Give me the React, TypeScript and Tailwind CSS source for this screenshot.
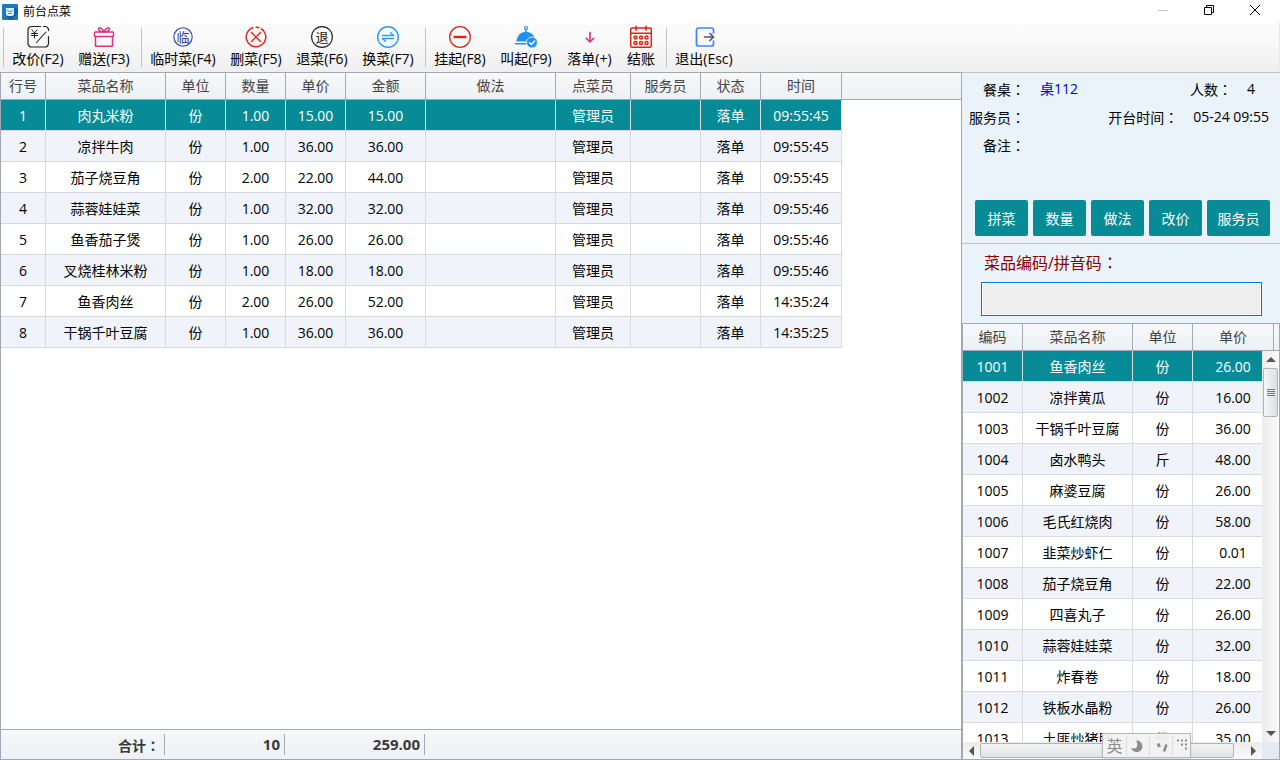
import type { ReactNode } from 'react'
import clsx from 'clsx'

interface OrderLine {
  name: string
  qty: string
  price: string
  amount: string
  time: string
}

interface Dish {
  code: string
  name: string
  unit: string
  price: string
}

const ORDER_LINES: OrderLine[] = [
  { name: '肉丸米粉', qty: '1.00', price: '15.00', amount: '15.00', time: '09:55:45' },
  { name: '凉拌牛肉', qty: '1.00', price: '36.00', amount: '36.00', time: '09:55:45' },
  { name: '茄子烧豆角', qty: '2.00', price: '22.00', amount: '44.00', time: '09:55:45' },
  { name: '蒜蓉娃娃菜', qty: '1.00', price: '32.00', amount: '32.00', time: '09:55:46' },
  { name: '鱼香茄子煲', qty: '1.00', price: '26.00', amount: '26.00', time: '09:55:46' },
  { name: '叉烧桂林米粉', qty: '1.00', price: '18.00', amount: '18.00', time: '09:55:46' },
  { name: '鱼香肉丝', qty: '2.00', price: '26.00', amount: '52.00', time: '14:35:24' },
  { name: '干锅千叶豆腐', qty: '1.00', price: '36.00', amount: '36.00', time: '14:35:25' },
]

const ORDER_COLUMNS = [
  { label: '行号', width: 'w-[45px]' },
  { label: '菜品名称', width: 'w-[120px]' },
  { label: '单位', width: 'w-[60px]' },
  { label: '数量', width: 'w-[60px]' },
  { label: '单价', width: 'w-[60px]' },
  { label: '金额', width: 'w-[80px]' },
  { label: '做法', width: 'w-[130px]' },
  { label: '点菜员', width: 'w-[75px]' },
  { label: '服务员', width: 'w-[70px]' },
  { label: '状态', width: 'w-[60px]' },
  { label: '时间', width: 'w-[81px]' },
]

const DISHES: Dish[] = [
  { code: '1001', name: '鱼香肉丝', unit: '份', price: '26.00' },
  { code: '1002', name: '凉拌黄瓜', unit: '份', price: '16.00' },
  { code: '1003', name: '干锅千叶豆腐', unit: '份', price: '36.00' },
  { code: '1004', name: '卤水鸭头', unit: '斤', price: '48.00' },
  { code: '1005', name: '麻婆豆腐', unit: '份', price: '26.00' },
  { code: '1006', name: '毛氏红烧肉', unit: '份', price: '58.00' },
  { code: '1007', name: '韭菜炒虾仁', unit: '份', price: '0.01' },
  { code: '1008', name: '茄子烧豆角', unit: '份', price: '22.00' },
  { code: '1009', name: '四喜丸子', unit: '份', price: '26.00' },
  { code: '1010', name: '蒜蓉娃娃菜', unit: '份', price: '32.00' },
  { code: '1011', name: '炸春卷', unit: '份', price: '18.00' },
  { code: '1012', name: '铁板水晶粉', unit: '份', price: '26.00' },
  { code: '1013', name: '土匪炒猪肝', unit: '份', price: '35.00' },
]

const DISH_COLUMNS = [
  { label: '编码', width: 'w-[60px]' },
  { label: '菜品名称', width: 'w-[110px]' },
  { label: '单位', width: 'w-[60px]' },
  { label: '单价', width: 'w-[81px]' },
]

const HEAD_CELL =
  'h-[27px] border-r border-b border-[#a2a8b4] p-0 text-center font-normal text-[#444]'
const BODY_CELL = 'h-[31px] border-r border-b border-[#d8dbe0] p-0 pt-0.5 text-center'

function rowTone(index: number) {
  if (index === 0) return 'bg-[#078b96] text-white'
  return index % 2 ? 'bg-[#f0f4fa]' : 'bg-white'
}

// Full-width colon set in the middle of its cell
function Colon() {
  return <span className="font-['Noto_Sans_CJK_TC',sans-serif]">：</span>
}

function Icon({ children }: { children: ReactNode }) {
  return (
    <svg
      width="24"
      height="24"
      viewBox="0 0 24 24"
      fill="none"
      strokeLinecap="round"
      strokeLinejoin="round"
      aria-hidden="true"
    >
      {children}
    </svg>
  )
}

function PriceIcon() {
  return (
    <Icon>
      <path
        d="M14.500 1.500H5.500a3.500 3.500 0 0 0-3.500 3.500v13.500a3.500 3.500 0 0 0 3.500 3.500h13.500a3.500 3.500 0 0 0 3.500-3.500V11.500M17.500 1.500h1.500a3.500 3.500 0 0 1 3.500 3v1"
        stroke="#222"
        strokeWidth="1.200"
      />
      <path d="M6 5l2.500 3L11 5M8.500 8v5M5.500 8.500h6M5.500 10.500h6" stroke="#222" strokeWidth="1" />
      <path d="M10.500 17.500l9.500-10.500" stroke="#222" strokeWidth="1.100" />
    </Icon>
  )
}

function GiftIcon() {
  return (
    <Icon>
      <g stroke="#dd3384" strokeWidth="1.500">
        <rect x="2.500" y="7" width="19" height="4.500" rx="0.800" />
        <path d="M3.500 11.500v9.700h17v-9.700" />
        <path d="M12 7C9 7 6 5.500 6.500 3.500 7.200 1.500 10.500 3.500 12 7c1.500-3.500 4.800-5.500 5.500-3.500C18 5.500 15 7 12 7z" />
      </g>
    </Icon>
  )
}

function GlyphIcon({ glyph, tone }: { glyph: string; tone: string }) {
  return (
    <Icon>
      <circle cx="12" cy="12" r={glyph === '临' ? 9.2 : 10.4} stroke={tone} strokeWidth="1.100" />
      <text x="12" y="16.500" textAnchor="middle" fontSize="13" fill={tone}>
        {glyph}
      </text>
    </Icon>
  )
}

function DeleteIcon() {
  return (
    <Icon>
      <circle
        cx="12"
        cy="12"
        r="9.800"
        stroke="#df2a1e"
        strokeWidth="1.500"
        strokeDasharray="53.600 2 4 2"
        strokeLinecap="butt"
        transform="rotate(-60 12 12)"
      />
      <path d="M7.500 7.500l9 9M16.500 7.500l-9 9" stroke="#df2a1e" strokeWidth="1.400" />
    </Icon>
  )
}

function SwapIcon() {
  return (
    <Icon>
      <circle cx="12" cy="12" r="10.300" stroke="#2f9bf0" strokeWidth="1.400" />
      <path d="M6.500 10.500h11.200l-3.200-2.800M17.500 13.500H6.300l3.200 2.800" stroke="#2f9bf0" strokeWidth="1.500" />
    </Icon>
  )
}

function HoldIcon() {
  return (
    <Icon>
      <circle cx="12" cy="12" r="10.300" stroke="#d8281c" strokeWidth="1.300" />
      <path d="M5.500 12h13" stroke="#d8281c" strokeWidth="2.400" strokeLinecap="butt" />
    </Icon>
  )
}

function ServeIcon() {
  return (
    <Icon>
      <circle cx="12" cy="3" r="1.500" stroke="#2490ee" strokeWidth="1.200" />
      <path d="M12 4.500v3" stroke="#2490ee" strokeWidth="1.500" />
      <path d="M2.300 16.500C3 10.500 7 6.800 12 6.800s9 3.700 9.700 9.700z" fill="#2490ee" />
      <path d="M1.500 18.800h14" stroke="#2490ee" strokeWidth="1.500" />
      <circle cx="18" cy="17.500" r="5.500" fill="#2490ee" stroke="#f7f7f7" strokeWidth="0.800" />
      <path d="M15.500 17.500l1.900 1.900 3.300-3.500" stroke="#fff" strokeWidth="1.400" />
    </Icon>
  )
}

function DropIcon() {
  return (
    <Icon>
      <path d="M12 7.500v9.300M8.300 13.300l3.700 3.700 3.700-3.700" stroke="#dd2b7d" strokeWidth="1.600" />
    </Icon>
  )
}

function CheckoutIcon() {
  return (
    <Icon>
      <g stroke="#dc2419" strokeWidth="1.500">
        <rect x="1.700" y="3" width="20.600" height="19.300" rx="1.500" />
        <path d="M1.700 8.200h20.600M7 1.200v4M17 1.200v4" />
        {[6.5, 12, 17.5].map((x) => (
          <g key={x}>
            <circle cx={x} cy="12.500" r="1.500" />
            <circle cx={x} cy="18" r="1.500" />
          </g>
        ))}
      </g>
    </Icon>
  )
}

function ExitIcon() {
  return (
    <Icon>
      <path
        d="M21.500 8V5a2 2 0 0 0-2-2H6.500a2 2 0 0 0-2 2v14a2 2 0 0 0 2 2h13a2 2 0 0 0 2-2v-3"
        stroke="#3d87f5"
        strokeWidth="1.700"
      />
      <path d="M12.500 12h9M18 8.500l3.500 3.500L18 15.500" stroke="#56586a" strokeWidth="1.700" />
    </Icon>
  )
}

const TOOL_GROUPS = [
  [
    { label: '改价(F2)', width: 'w-[66px]', icon: <PriceIcon /> },
    { label: '赠送(F3)', width: 'w-[66px]', icon: <GiftIcon /> },
  ],
  [
    { label: '临时菜(F4)', width: 'w-20', icon: <GlyphIcon glyph="临" tone="#34439c" /> },
    { label: '删菜(F5)', width: 'w-[66px]', icon: <DeleteIcon /> },
    { label: '退菜(F6)', width: 'w-[66px]', icon: <GlyphIcon glyph="退" tone="#222222" /> },
    { label: '换菜(F7)', width: 'w-[66px]', icon: <SwapIcon /> },
  ],
  [
    { label: '挂起(F8)', width: 'w-[66px]', icon: <HoldIcon /> },
    { label: '叫起(F9)', width: 'w-[66px]', icon: <ServeIcon /> },
    { label: '落单(+)', width: 'w-[61px]', icon: <DropIcon /> },
    { label: '结账', width: 'w-[42px]', icon: <CheckoutIcon /> },
  ],
  [{ label: '退出(Esc)', width: 'w-[72px]', icon: <ExitIcon /> }],
]

function TitleBar() {
  return (
    <header className="flex h-[23px] shrink-0 items-center bg-white pr-0.5 pl-0.5 text-xs">
      <svg width="16" height="16" viewBox="0 0 16 16" aria-hidden="true">
        <rect width="16" height="16" rx="1" fill="#1c78c0" />
        <path d="M9 16l7-7V5l-4-1-8 8 4 4z" fill="#155f9e" />
        <path d="M4 4h8v6.500L10.500 12h-5L4 10.500z" fill="#dff0fb" />
        <path d="M5 6.500l3 1 3-1M6 9.500h4" stroke="#3d95d4" fill="none" />
      </svg>
      <h1 className="ml-[5px]">前台点菜</h1>
      <div className="ml-auto flex pb-[3px]">
        <button type="button" aria-label="最小化" className="flex h-5 w-[46px] items-center justify-center">
          <svg width="10" height="10" viewBox="0 0 10 10" aria-hidden="true">
            <path d="M0 5.500h10" stroke="#c4c4c4" />
          </svg>
        </button>
        <button type="button" aria-label="还原" className="flex h-5 w-[46px] items-center justify-center">
          <svg width="10" height="10" viewBox="0 0 10 10" fill="none" stroke="#000" aria-hidden="true">
            <path d="M0.500 2.500h7v7h-7zM2.500 2.500v-2h7v7h-2" />
          </svg>
        </button>
        <button type="button" aria-label="关闭" className="flex h-5 w-[46px] items-center justify-center">
          <svg width="10" height="10" viewBox="0 0 10 10" stroke="#000" aria-hidden="true">
            <path d="M0 0l10 10M10 0L0 10" />
          </svg>
        </button>
      </div>
    </header>
  )
}

function Toolbar() {
  return (
    <nav className="flex h-[49px] shrink-0 border-r border-[#e8e8e8] bg-linear-to-b from-[#fcfcfc] via-[#f7f7f7] to-[#efefef]">
      {TOOL_GROUPS.map((group, index) => (
        <div key={index} className="flex">
          <span className={clsx('mt-[5px] mr-px h-[39px] w-px bg-[#c3c3c3]', index ? 'ml-1' : 'ml-[3px]')} />
          {group.map((tool) => (
            <button
              key={tool.label}
              type="button"
              className={clsx(
                'flex flex-col items-center pt-0.5 leading-5 whitespace-nowrap',
                tool.width,
              )}
            >
              {tool.icon}
              {tool.label}
            </button>
          ))}
        </div>
      ))}
    </nav>
  )
}

function OrderTable() {
  return (
    <table className="w-full table-fixed border-separate border-spacing-0">
      <thead>
        <tr className="bg-linear-to-b from-[#f7f9fb] to-[#edf0f4]">
          {ORDER_COLUMNS.map((column) => (
            <th key={column.label} className={clsx(HEAD_CELL, column.width)}>
              {column.label}
            </th>
          ))}
          <td className="border-b border-[#a2a8b4] p-0" />
        </tr>
      </thead>
      <tbody>
        {ORDER_LINES.map((line, index) => {
          const cells = [
            index + 1,
            line.name,
            '份',
            line.qty,
            line.price,
            line.amount,
            '',
            '管理员',
            '',
            '落单',
            line.time,
          ]
          return (
            <tr key={line.name}>
              {cells.map((cell, cellIndex) => (
                <td key={cellIndex} className={clsx(BODY_CELL, rowTone(index))}>
                  {cell}
                </td>
              ))}
              <td className="p-0" />
            </tr>
          )
        })}
      </tbody>
    </table>
  )
}

function OrderTotals() {
  return (
    <footer className="flex h-[30px] shrink-0 items-center border-t border-[#a2a8b4] bg-linear-to-b from-[#f6f8fa] to-[#edf1f4] text-right font-bold text-[#3a3a3a]">
      <span className="h-[21px] w-[164px] border-r border-[#a2a8b4] leading-[22px]">
        <span className="pr-1">
          合计
          <Colon />
        </span>
      </span>
      <span className="h-[21px] w-[120px] border-r border-[#a2a8b4] pr-1 text-[15px] leading-5">10</span>
      <span className="h-[21px] w-[140px] border-r border-[#a2a8b4] pr-1 text-[15px] leading-5">259.00</span>
    </footer>
  )
}

function InfoLabel({ children }: { children: ReactNode }) {
  return (
    <dt className="whitespace-nowrap">
      {children}
      <Colon />
    </dt>
  )
}

function TableInfo() {
  return (
    <section className="flex h-[172px] flex-col justify-between border-y border-[#c0c3c8] pt-0.5 pb-[7px]">
      <dl>
        <div className="flex h-7 items-center gap-[15px] pr-[25px]">
          <div className="flex gap-[15px] pl-[21px]">
            <InfoLabel>餐桌</InfoLabel>
            <dd className="text-[#0000cd]">桌112</dd>
          </div>
          <div className="ml-auto flex gap-[15px]">
            <InfoLabel>人数</InfoLabel>
            <dd>4</dd>
          </div>
        </div>
        <div className="flex h-7 items-center pr-[11px] pl-[7px]">
          <InfoLabel>服务员</InfoLabel>
          <dd />
          <div className="ml-auto flex gap-[15px]">
            <InfoLabel>开台时间</InfoLabel>
            <dd>05-24 09:55</dd>
          </div>
        </div>
        <div className="flex h-7 items-center pl-[21px]">
          <InfoLabel>备注</InfoLabel>
          <dd />
        </div>
      </dl>
      <div className="flex justify-end gap-[5px] pr-2.5">
        {['拼菜', '数量', '做法', '改价', '服务员'].map((action) => (
          <button
            key={action}
            type="button"
            className={clsx(
              'h-9 rounded-xs bg-[#078b96] pt-0.5 text-white',
              action.length > 2 ? 'w-[63px]' : 'w-[53px]',
            )}
          >
            {action}
          </button>
        ))}
      </div>
    </section>
  )
}

function DishTable() {
  return (
    <section className="flex min-h-0 flex-1 flex-col border border-[#a2a8b4] bg-white">
      <div className="flex shrink-0 bg-linear-to-b from-[#f7f9fb] to-[#edf0f4]">
        <table className="table-fixed border-separate border-spacing-0">
          <thead>
            <tr>
              {DISH_COLUMNS.map((column) => (
                <th key={column.label} className={clsx(HEAD_CELL, column.width)}>
                  {column.label}
                </th>
              ))}
            </tr>
          </thead>
        </table>
        <span className="flex-1 border-b border-[#a2a8b4]" />
      </div>
      <div className="flex min-h-0 flex-1">
        <div className="min-w-0 flex-1 overflow-hidden">
          <table className="w-[311px] table-fixed border-separate border-spacing-0">
            <colgroup>
              {DISH_COLUMNS.map((column) => (
                <col key={column.label} className={column.width} />
              ))}
            </colgroup>
            <tbody>
              {DISHES.map((dish, index) => (
                <tr key={dish.code} className={rowTone(index)}>
                  <td className={BODY_CELL}>{dish.code}</td>
                  <td className={BODY_CELL}>{dish.name}</td>
                  <td className={BODY_CELL}>{dish.unit}</td>
                  <td className={BODY_CELL}>{dish.price}</td>
                </tr>
              ))}
            </tbody>
          </table>
        </div>
        <div className="flex w-[17px] shrink-0 flex-col items-center bg-linear-to-r from-[#ececec] to-[#fafafa]">
          <Arrow d="M0 5l5-5 5 5z" width={10} height={5} className="my-1.5" />
          <div className="flex h-[49px] w-[15px] flex-col items-center justify-center gap-px rounded-xs border border-[#b0b4b8] bg-linear-to-r from-[#f6f6f6] to-[#dcdfe1]">
            <span className="h-px w-2 bg-[#777]" />
            <span className="h-px w-2 bg-[#777]" />
            <span className="h-px w-2 bg-[#777]" />
            <span className="h-px w-2 bg-[#777]" />
          </div>
          <Arrow d="M0 0l5 5 5-5z" width={10} height={5} className="mt-auto mb-1.5" />
        </div>
      </div>
      <div className="flex h-[17px] shrink-0">
        <div className="flex flex-1 items-center bg-linear-to-b from-[#ececec] to-[#fafafa]">
          <Arrow d="M5 0L0 5l5 5z" width={5} height={10} className="mx-1.5" />
          <div className="h-[15px] w-[254px] rounded-xs border border-[#b0b4b8] bg-linear-to-b from-[#f4f4f4] to-[#dfe3e4]" />
          <Arrow d="M0 0l5 5-5 5z" width={5} height={10} className="mr-1.5 ml-auto" />
        </div>
        <span className="w-[17px] bg-[#e6ebf3]" />
      </div>
    </section>
  )
}

interface ArrowProps {
  d: string
  width: number
  height: number
  className: string
}

function Arrow({ d, width, height, className }: ArrowProps) {
  return (
    <svg
      width={width}
      height={height}
      viewBox={`0 0 ${width} ${height}`}
      className={clsx('shrink-0', className)}
      aria-hidden="true"
    >
      <path d={d} fill="#555" />
    </svg>
  )
}

// Input method bar, floats over the dish list
function ImeBar() {
  return (
    <div className="absolute right-[89px] bottom-0.5 flex h-[25px] w-[89px] items-center border border-[#b8b8b8] bg-[#f2f2f2]/95 text-base text-[#8c8c8c] shadow-sm">
      <span className="flex h-5 w-[23px] items-center justify-center">英</span>
      <svg width="64" height="22" viewBox="0 0 64 22" aria-hidden="true">
        <path d="M10 5.500a5.800 5.800 0 1 1-5 7c1.500 1.500 5 1.500 6-1 .800-2.300 0-4.500-1-6z" fill="#8c8c8c" />
        <path d="M0.500 1v20M23.500 1v20M46.500 1v20" stroke="#dcdcdc" />
        <path d="M32 8.500l1.500 3.500" stroke="#8c8c8c" strokeWidth="3" />
        <path d="M40.500 9.500l-2.500 7" stroke="#8c8c8c" strokeWidth="2.500" />
        <path d="M51 5.500h10M55 9.500h6M59 13.500h2" stroke="#8c8c8c" strokeWidth="2" strokeDasharray="2 2" />
      </svg>
    </div>
  )
}

export default function App() {
  return (
    <div className="relative flex h-screen flex-col overflow-hidden bg-white font-['Open_Sans','Noto_Sans_CJK_SC',sans-serif] text-sm text-black">
      <TitleBar />
      <Toolbar />
      <div className="flex min-h-0 flex-1">
        <main className="flex min-w-0 flex-1 flex-col border border-[#a2a8b4]">
          <div className="min-h-0 flex-1 overflow-hidden">
            <OrderTable />
          </div>
          <OrderTotals />
        </main>
        <aside className="flex w-[318px] shrink-0 flex-col bg-[#eaf3fa]">
          <TableInfo />
          <div className="flex flex-col gap-[7px] pt-1.5 pr-[18px] pb-[7px] pl-[19px]">
            <label htmlFor="dish-code" className="pl-[3px] text-base leading-6 text-[#8b0000]">
              菜品编码/拼音码
              <Colon />
            </label>
            <input
              id="dish-code"
              type="text"
              className="h-[34px] w-full border border-[#0078d7] bg-[#eee] px-2 ring-1 ring-white outline-none ring-inset"
            />
          </div>
          <DishTable />
        </aside>
      </div>
      <ImeBar />
    </div>
  )
}
